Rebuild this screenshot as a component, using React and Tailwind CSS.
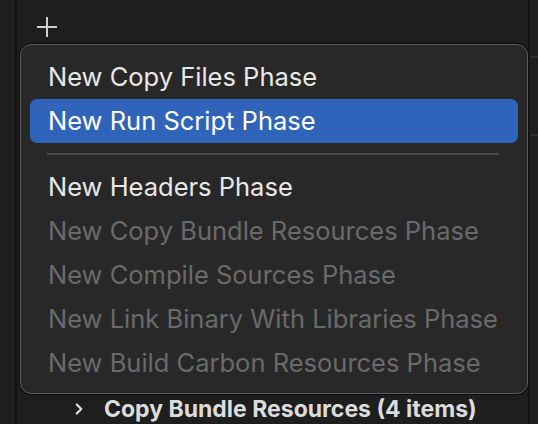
import { ChevronRight } from 'lucide-react';

const items = [
  { label: 'New Copy Files Phase', enabled: true },
  { label: 'New Run Script Phase', enabled: true, active: true },
  { divider: true },
  { label: 'New Headers Phase', enabled: true },
  { label: 'New Copy Bundle Resources Phase' },
  { label: 'New Compile Sources Phase' },
  { label: 'New Link Binary With Libraries Phase' },
  { label: 'New Build Carbon Resources Phase' },
];

const MenuRow = ({ item }) => {
  if (item.divider) {
    return (
      <div className="h-[22px] flex items-center pl-[17px] pr-[19px]">
        <div className="h-[2px] w-full bg-[#4a4a4a]" />
      </div>
    );
  }
  return (
    <div
      className={`h-[44px] flex items-center px-[18px] rounded-[7px] text-[25.5px] ${
        item.active
          ? 'bg-[#3064ba] text-white'
          : item.enabled
          ? 'text-[#e8e8e8]'
          : 'text-[#6a6a6a]'
      }`}
    >
      {item.label}
    </div>
  );
};

export default function App() {
  return (
    <div
      className="w-[538px] h-[424px] bg-[#1e1e1e] flex overflow-hidden relative"
      style={{ fontFamily: 'Inter, "Noto Sans", sans-serif' }}
    >
      <div className="w-[17px] shrink-0 bg-[#1f1f1f] border-r-2 border-[#111]" />
      <div className="flex-1 flex flex-col relative">
        <div className="h-[44px] flex items-start pt-[17px] pl-[20px]">
          <svg width="20" height="20" viewBox="0 0 20 20" className="text-[#cfcfcf]">
            <path d="M10 0v20M0 10h20" stroke="currentColor" strokeWidth="2" />
          </svg>
        </div>
        <div className="flex-1" />
        <div className="h-[30px] flex items-center pl-[53px] gap-[16px] text-[#dcdcdc]">
          <ChevronRight size={18} strokeWidth={3} />
          <span className="text-[23px] font-bold">Copy Bundle Resources (4 items)</span>
        </div>

        <div className="absolute left-[3px] top-[44px] w-[508px] rounded-[11px] border border-[#5b5b5b] bg-[#282828] shadow-[0_0_0_1px_#0c0c0c] px-[9px] pt-[10px] pb-[8px]">
          {items.map((item, i) => (
            <MenuRow key={i} item={item} />
          ))}
        </div>
      </div>
      <div className="absolute left-[528px] top-0 w-[2px] h-[424px] bg-[#141414]" />
      <div className="absolute left-[530px] top-[56px] w-[8px] h-[2px] bg-[#2e2e2e]" />
      <div className="absolute left-[530px] top-[134px] w-[8px] h-[2px] bg-[#2e2e2e]" />
    </div>
  );
}
